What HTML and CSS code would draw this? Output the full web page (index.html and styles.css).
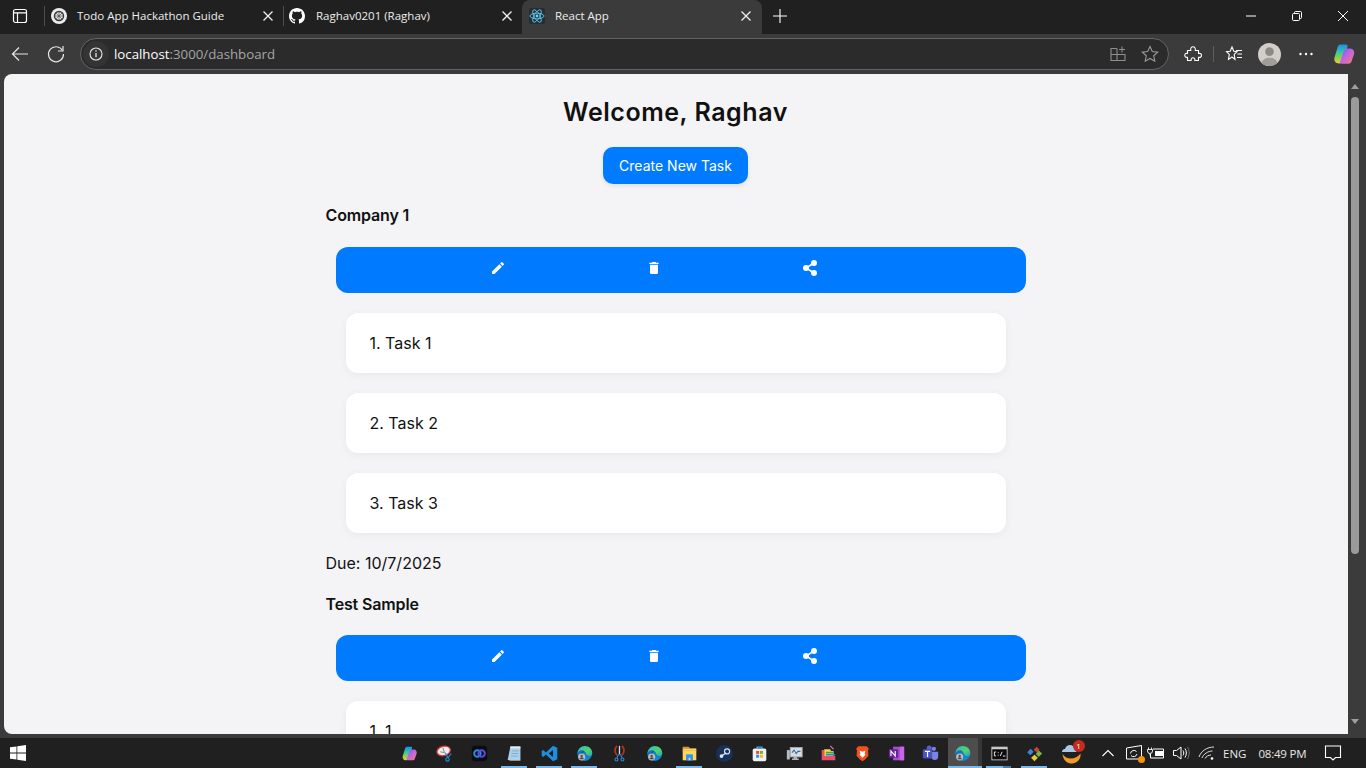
FILE: index.html
```html
<!DOCTYPE html>
<html lang="en">
<head>
<meta charset="utf-8">
<title>React App</title>
<link rel="stylesheet" href="styles.css">
</head>
<body>
<svg class="defs" width="0" height="0" aria-hidden="true">
  <defs>
    <linearGradient id="copl" x1="0" y1="0" x2="0" y2="1">
      <stop offset="0" stop-color="#1a8fe8"/><stop offset=".4" stop-color="#35c6a8"/><stop offset=".7" stop-color="#8ed04a"/><stop offset="1" stop-color="#f6c53a"/>
    </linearGradient>
    <linearGradient id="copr" x1="0" y1="0" x2="1" y2="1">
      <stop offset="0" stop-color="#6f5cf2"/><stop offset=".5" stop-color="#c765dc"/><stop offset="1" stop-color="#f77f6e"/>
    </linearGradient>
    <linearGradient id="edge" x1="0" y1="0" x2="1" y2="1">
      <stop offset="0" stop-color="#2cc0c0"/><stop offset=".6" stop-color="#52d26a"/><stop offset="1" stop-color="#1f9bd8"/>
    </linearGradient>
    <symbol id="i-edit" viewBox="0 0 24 24"><path d="M3 17.250V21h3.750L17.810 9.940l-3.750-3.750L3 17.250zM20.710 7.040a1 1 0 0 0 0-1.410l-2.340-2.340a1 1 0 0 0-1.410 0l-1.830 1.830 3.750 3.750 1.830-1.830z"/></symbol>
    <symbol id="i-del" viewBox="0 0 24 24"><path d="M6 19c0 1.100.9 2 2 2h8c1.100 0 2-.9 2-2V7H6v12zM19 4h-3.500l-1-1h-5l-1 1H5v2h14V4z"/></symbol>
    <symbol id="i-share" viewBox="0 0 16 16"><circle cx="12" cy="3" r="3"/><circle cx="4" cy="8" r="3"/><circle cx="12" cy="13" r="3"/><path d="M12 3L4 8l8 5" fill="none" stroke="#fff" stroke-width="1.500"/></symbol>
    <symbol id="i-x" viewBox="0 0 12 12"><path d="M1.500 1.500l9 9M10.500 1.500l-9 9" fill="none" stroke="currentColor" stroke-width="1.300"/></symbol>
    <symbol id="i-edge" viewBox="0 0 24 24">
      <path d="M2 13C2 6 7 1.500 12.500 1.500 18.500 1.500 23 6 23 11.500c0 3-2 4.500-4.500 4.500-2 0-4-1-4-2.500 0-3-3-5.500-6-5.500-3 0-5.500 2-6.500 5z" fill="url(#edge)"/>
      <path d="M2 13c0-3 2.500-5.500 6-5.500 2 0 3 .5 3.500 1.500-3 0-5 3-5 6.500 0 3 2 5.500 5 7C6 22 2 18 2 13z" fill="#1173c9"/>
      <path d="M14.500 13.500c0 1.500 1.500 2.500 3.500 2.500 2 0 4-.6 4.700-1.800C21 19.500 17 22.500 12.500 22.500c-3 0-6-3-6-6.500 0-3 2.500-6 5-6 1.500 0 3 2 3 3.500z" fill="#1485d6"/>
      <circle cx="8" cy="17" r="5" fill="#bdbdbd"/><circle cx="8" cy="15.500" r="1.700" fill="#4f4f4f"/><path d="M4.800 20c.5-1.900 1.800-2.700 3.200-2.700s2.700.8 3.200 2.700z" fill="#4f4f4f"/>
    </symbol>
    <symbol id="i-copilot" viewBox="0 0 24 24">
      <path d="M8.500 2.500h5.500c1.200 0 1.900.7 1.500 2L12 17c-.8 2.800-2.200 4.500-5 4.500-3.300 0-5.500-2.800-4.500-6l3-10c.5-2 1.400-3 3-3z" fill="url(#copl)"/>
      <path d="M15.500 6.500h2.500c3 0 5 2.800 4 5.800l-2.500 7.200c-.6 1.500-1.600 2.200-3.100 2.200H9.500c-1.200 0-1.800-.8-1.400-2l3.600-10.500c.6-1.600 2-2.700 3.800-2.700z" fill="url(#copr)"/>
    </symbol>
  </defs>
</svg>

<header class="tabstrip">
  <div class="sidebtn">
    <svg class="ico16" viewBox="0 0 16 16"><rect x="1.500" y="1.500" width="13" height="13" rx="2" fill="none" stroke="#fff" stroke-width="1.200"/><path d="M1.500 4.800h13M5.500 4.800v9.700" fill="none" stroke="#fff" stroke-width="1.200"/></svg>
  </div>
  <span class="tabsep"></span>
  <div class="tab tab-one">
    <svg class="favicon" viewBox="0 0 16 16"><circle cx="8" cy="8" r="8" fill="#ececec"/><circle cx="8" cy="8" r="4.500" fill="none" stroke="#333" stroke-width="1.400"/><path d="M8 3.500v9M3.500 8h9M5 5l6 6M11 5l-6 6" stroke="#555" stroke-width=".8"/></svg>
    <span class="tabtext">Todo App Hackathon Guide</span>
    <svg class="tabx"><use href="#i-x"/></svg>
  </div>
  <span class="tabsep"></span>
  <div class="tab tab-two">
    <svg class="favicon" viewBox="0 0 16 16"><path fill="#fff" d="M8 0C3.580 0 0 3.580 0 8c0 3.540 2.290 6.530 5.470 7.590.4.070.55-.17.55-.38 0-.19-.01-.82-.01-1.490-2.010.37-2.530-.49-2.690-.94-.09-.23-.48-.94-.82-1.130-.28-.15-.68-.52-.01-.53.630-.01 1.080.58 1.230.82.720 1.210 1.870.87 2.330.66.070-.52.280-.87.510-1.070-1.780-.2-3.640-.89-3.640-3.950 0-.87.310-1.590.820-2.150-.08-.2-.36-1.020.08-2.120 0 0 .67-.21 2.200.82.640-.18 1.320-.27 2-.27s1.360.09 2 .27c1.530-1.040 2.200-.82 2.200-.82.440 1.100.160 1.920.080 2.120.51.560.82 1.270.82 2.150 0 3.070-1.870 3.750-3.650 3.950.29.250.54.730.54 1.480 0 1.070-.01 1.930-.01 2.200 0 .21.150.46.550.38A8.010 8.010 0 0 0 16 8c0-4.420-3.580-8-8-8z"/></svg>
    <span class="tabtext">Raghav0201 (Raghav)</span>
    <svg class="tabx"><use href="#i-x"/></svg>
  </div>
  <div class="tab tab-active">
    <svg class="favicon" viewBox="0 0 16 16"><rect width="16" height="16" rx="2" fill="#282c34"/><g fill="none" stroke="#61dafb" stroke-width=".8"><ellipse cx="8" cy="8" rx="7" ry="2.800"/><ellipse cx="8" cy="8" rx="7" ry="2.800" transform="rotate(60 8 8)"/><ellipse cx="8" cy="8" rx="7" ry="2.800" transform="rotate(120 8 8)"/></g><circle cx="8" cy="8" r="1.400" fill="#61dafb"/></svg>
    <span class="tabtext">React App</span>
    <svg class="tabx"><use href="#i-x"/></svg>
  </div>
  <div class="newtab">
    <svg class="ico16" viewBox="0 0 16 16"><path d="M8 1v14M1 8h14" stroke="#fff" stroke-width="1.100"/></svg>
  </div>
  <div class="winctl">
    <div class="winbtn"><svg class="ico12" viewBox="0 0 12 12"><path d="M1 6h10" stroke="#fff" stroke-width="1"/></svg></div>
    <div class="winbtn"><svg class="ico12" viewBox="0 0 12 12"><rect x="1.500" y="3.500" width="7" height="7" rx="1" fill="none" stroke="#fff"/><path d="M3.500 3.500V2.500a1 1 0 0 1 1-1h5a1 1 0 0 1 1 1v5a1 1 0 0 1-1 1h-1" fill="none" stroke="#fff"/></svg></div>
    <div class="winbtn"><svg class="ico12" viewBox="0 0 12 12"><path d="M1 1l10 10M11 1L1 11" stroke="#fff" stroke-width="1"/></svg></div>
  </div>
</header>

<nav class="toolbar">
  <div class="navbtn"><svg class="ico20" viewBox="0 0 20 20"><path d="M18 10H2.500M9 3.500L2.500 10 9 16.500" fill="none" stroke="#e6e6e6" stroke-width="1.200"/></svg></div>
  <div class="navbtn"><svg class="ico20" viewBox="0 0 20 20"><path d="M16.500 6.500A7.500 7.500 0 1 0 17.500 10" fill="none" stroke="#e6e6e6" stroke-width="1.200"/><path d="M17 2v5h-5" fill="none" stroke="#e6e6e6" stroke-width="1.200"/></svg></div>
  <div class="address">
    <span class="siteinfo"><svg class="ico14" viewBox="0 0 14 14"><circle cx="7" cy="7" r="6" fill="none" stroke="#e6e6e6" stroke-width="1.100"/><path d="M7 6v4.200" stroke="#e6e6e6" stroke-width="1.300"/><circle cx="7" cy="4" r=".8" fill="#e6e6e6"/></svg></span>
    <span class="url"><span class="host">localhost</span><span class="path">:3000/dashboard</span></span>
    <span class="addr-icons">
      <svg class="ico18" viewBox="0 0 18 18"><path d="M8 3.500H2v12h14V9.500H2M8 3.500v12" fill="none" stroke="#8f8f8f" stroke-width="1.100"/><path d="M13 1.500v6M10 4.500h6" stroke="#8f8f8f" stroke-width="1.100"/></svg>
      <svg class="ico18" viewBox="0 0 18 18"><path d="M9 1.500l2.300 5 5.400.6-4 3.700 1.100 5.400L9 13.500l-4.800 2.700 1.100-5.400-4-3.700 5.400-.6z" fill="none" stroke="#9a9a9a" stroke-width="1.100"/></svg>
    </span>
  </div>
  <div class="tools">
    <svg class="ico18 t-ext" viewBox="0 0 18 18"><path d="M3.500 5.500H6.800C6.200 3 7.500 1.800 9 1.800S11.800 3 11.200 5.500H14.500V8.500C16.500 8 17.500 9 17.500 10.300S16.500 12.800 14.500 12.200V15.500H10.800C11.200 13.800 10.300 12.800 9 12.800S6.800 13.800 7.200 15.500H3.500V12.200C1.800 12.800 .8 11.800 .8 10.300S1.800 8 3.500 8.500Z" fill="none" stroke="#fff" stroke-width="1.100" stroke-linejoin="round"/></svg>
    <span class="toolsep"></span>
    <svg class="ico18 t-fav" viewBox="0 0 18 18"><path d="M7 2l1.800 4.200 3.200.4-2.800 2.800.8 5L7 12l-3.500 2.400.8-5L1.500 6.600l3.700-.4z" fill="none" stroke="#fff" stroke-width="1.100"/><path d="M11 5.500h6M12.500 9h4.500M12 12.500h5" stroke="#fff" stroke-width="1.100"/></svg>
    <svg class="avatar t-ava" viewBox="0 0 24 24"><circle cx="12" cy="12" r="12" fill="#d2cfca"/><circle cx="12" cy="9" r="4.500" fill="#8d8a86"/><path d="M3.500 20.500C5 17 8 15.500 12 15.500s7 1.500 8.500 5A12 12 0 0 1 3.500 20.500z" fill="#a19e99"/></svg>
    <svg class="ico18 t-more" viewBox="0 0 18 18"><circle cx="3.500" cy="9" r="1.200" fill="#fff"/><circle cx="9" cy="9" r="1.200" fill="#fff"/><circle cx="14.500" cy="9" r="1.200" fill="#fff"/></svg>
    <svg class="copilot t-cop"><use href="#i-copilot"/></svg>
  </div>
</nav>

<div class="viewport">
  <main class="page">
    <h1 class="welcome">Welcome, Raghav</h1>
    <button class="create">Create New Task</button>
    <div class="list">
      <section class="company">
        <h2 class="cname">Company 1</h2>
        <div class="actions">
          <span class="act"><svg class="acticon"><use href="#i-edit"/></svg></span>
          <span class="act"><svg class="acticon"><use href="#i-del"/></svg></span>
          <span class="act"><svg class="acticon"><use href="#i-share"/></svg></span>
        </div>
        <div class="task">1. Task 1</div>
        <div class="task">2. Task 2</div>
        <div class="task">3. Task 3</div>
        <p class="due">Due: 10/7/2025</p>
      </section>
      <section class="company">
        <h2 class="cname">Test Sample</h2>
        <div class="actions">
          <span class="act"><svg class="acticon"><use href="#i-edit"/></svg></span>
          <span class="act"><svg class="acticon"><use href="#i-del"/></svg></span>
          <span class="act"><svg class="acticon"><use href="#i-share"/></svg></span>
        </div>
        <div class="task">1. 1</div>
      </section>
    </div>
  </main>
  <aside class="scrollbar">
    <span class="arrow-up"></span>
    <span class="thumb"></span>
    <span class="arrow-down"></span>
  </aside>
</div>

<footer class="taskbar">
  <svg class="winlogo" viewBox="0 0 16 16"><path fill="#fff" d="M0 2.300l6.500-.9v6.200H0zM7.300 1.300L16 0v7.600H7.300zM0 8.400h6.500v6.200L0 13.700zM7.300 8.400H16V16l-8.700-1.200z"/></svg>
  <div class="apps">
    <span class="app"><svg class="appicon"><use href="#i-copilot"/></svg></span>
    <span class="app"><svg class="appicon" viewBox="0 0 20 20"><ellipse cx="9" cy="7" rx="8" ry="5.500" transform="rotate(-15 9 7)" fill="#eee" stroke="#d23c3c" stroke-width="1.500"/><path d="M8 3l2 6M10 9l-5-1" stroke="#777"/><path d="M11 9l3 6M18 10l-4 5" stroke="#1f8fdc" stroke-width="1.300"/><circle cx="13.500" cy="17" r="2" fill="none" stroke="#1f8fdc" stroke-width="1.300"/></svg></span>
    <span class="app"><svg class="appicon" viewBox="0 0 20 20"><rect x="1" y="1" width="18" height="18" rx="4" fill="#0c0c10"/><circle cx="7.500" cy="10" r="3.800" fill="none" stroke="#1f8fe8" stroke-width="2.300"/><circle cx="12.500" cy="10" r="3.800" fill="none" stroke="#5a4fe0" stroke-width="2.300"/></svg></span>
    <span class="app run"><svg class="appicon" viewBox="0 0 20 20"><path d="M5 2.500h12v15H2z" fill="#a9d2ea"/><path d="M5 17.500h12v1H3z" fill="#cbb98f"/><path d="M5 1.500h12v2.500H5z" fill="#e6eef3"/><path d="M7 7h8M6.500 10h8M6 13h8" stroke="#7fa7c2"/></svg></span>
    <span class="app run"><svg class="appicon" viewBox="0 0 24 24"><path d="M17 1l6 3v16l-6 3-10-9.500L3 17l-2-1.500V8.500L3 7l4 3.500zM17 7l-6 5 6 5z" fill="#1c8fe0" fill-rule="evenodd"/></svg></span>
    <span class="app run"><svg class="appicon"><use href="#i-edge"/></svg></span>
    <span class="app"><svg class="appicon" viewBox="0 0 20 20"><path d="M7 1c-3 3-3 8 0 11M13 1c3 3 3 8 0 11" fill="none" stroke="#b8341f" stroke-width="2"/><path d="M10 1v10" stroke="#ddd" stroke-width="1.500"/><path d="M9 11l-2 4M11 11l2 4" stroke="#2a8fe0" stroke-width="1.300"/><circle cx="6.500" cy="17" r="1.800" fill="none" stroke="#2a8fe0" stroke-width="1.200"/><circle cx="13.500" cy="17" r="1.800" fill="none" stroke="#2a8fe0" stroke-width="1.200"/></svg></span>
    <span class="app"><svg class="appicon"><use href="#i-edge"/></svg></span>
    <span class="app run"><svg class="appicon" viewBox="0 0 20 20"><path d="M2 2h7l2 2H2z" fill="#d99a1c"/><path d="M2 4h16v14H2z" fill="#fbd56a"/><path d="M2 6h16v1H2z" fill="#f3bf3f"/><path d="M6 18v-7h8v7z" fill="#2f95e4"/><path d="M9 18v-3h2v3z" fill="#bfe0f7"/></svg></span>
    <span class="app"><svg class="appicon" viewBox="0 0 20 20"><circle cx="10" cy="10" r="9.800" fill="#16325a"/><circle cx="13" cy="7.500" r="3" fill="none" stroke="#dfe6ee" stroke-width="1.300"/><circle cx="6.500" cy="13" r="2.200" fill="#dfe6ee"/><path d="M6.500 13L12 9" stroke="#dfe6ee" stroke-width="1.500"/></svg></span>
    <span class="app"><svg class="appicon" viewBox="0 0 20 20"><path d="M7 4V2.500h6V4" fill="none" stroke="#3fb0e8" stroke-width="1.300"/><rect x="2" y="4" width="16" height="15" rx="2" fill="#eef0f2"/><rect x="6" y="7" width="3.500" height="3.500" fill="#e8532d"/><rect x="10.500" y="7" width="3.500" height="3.500" fill="#6fb52c"/><rect x="6" y="11.500" width="3.500" height="3.500" fill="#1c9bea"/><rect x="10.500" y="11.500" width="3.500" height="3.500" fill="#fbb81c"/></svg></span>
    <span class="app"><svg class="appicon" viewBox="0 0 20 20"><rect x="5" y="3" width="14" height="11" fill="#d8dcdf" stroke="#aab0b4"/><path d="M7 9l2.500-3 2.500 4 2-2.500h3" fill="none" stroke="#2a6db0" stroke-width="1.200"/><rect x="1" y="6" width="3.500" height="11" fill="#b9bdc0"/><path d="M9 14h4v2h2v1.500H7V16h2z" fill="#b0b4b7"/></svg></span>
    <span class="app tight"><svg class="appicon" viewBox="0 0 20 20"><path d="M2 6v12h16v-5H5V6z" fill="#e5506a"/><path d="M5 5h7l1 2h3v6H5z" fill="#f5d34a"/><path d="M7 8h9v1.800H7z" fill="#2fa84f"/><path d="M7 10.500h11v1.800H7z" fill="#2f7fe0"/><path d="M12 1l4 4" stroke="#c66ae0" stroke-width="1.500"/></svg></span>
    <span class="app tight"><svg class="appicon" viewBox="0 0 20 20"><path d="M5 1.500h10l2.500 3-1 2 .5 6-4 4.500L10 19l-3-2-4-4.500.5-6-1-2z" fill="#f4501e"/><path d="M6.500 6.500L10 8l3.500-1.500-1 3.500 1 1.500L10 15l-3.500-3.500 1-1.500z" fill="#fff"/></svg></span>
    <span class="app tight"><svg class="appicon" viewBox="0 0 20 20"><rect x="6" y="2" width="13" height="16" fill="#a651c9"/><rect x="14" y="2" width="5" height="16" fill="#ca64ea"/><rect x="1" y="5" width="11" height="10" rx="1" fill="#6b1f9e"/><path d="M3.500 13V7l5 6V7" fill="none" stroke="#fff" stroke-width="1.300"/></svg></span>
    <span class="app tight"><svg class="appicon" viewBox="0 0 20 20"><circle cx="14" cy="4.500" r="2.500" fill="#7b83eb"/><path d="M11 8h8v6c0 2-2 3.500-4 3.500S11 16 11 14z" fill="#7b83eb"/><circle cx="8.500" cy="3.500" r="3" fill="#5b5fc7"/><rect x="1" y="5" width="11" height="11" rx="1.500" fill="#4b53bc"/><path d="M3.500 7.500h6M6.500 7.500v6.500" stroke="#fff" stroke-width="1.400"/></svg></span>
    <span class="app tight active"><svg class="appicon"><use href="#i-edge"/></svg></span>
    <span class="app run dbl"><svg class="appicon" viewBox="0 0 20 20"><rect x="1" y="2.500" width="18" height="15" fill="#0c0c0c" stroke="#cfcfcf"/><rect x="1" y="2.500" width="18" height="2.500" fill="#cfcfcf"/><path d="M6 8.200H4v4.600h2M8 9h1M8 12h1M13 8l-2 5M14 13h3" fill="none" stroke="#fff" stroke-width="1"/></svg></span>
    <span class="app run"><svg class="appicon" viewBox="0 0 20 20"><path d="M5.500 4.500L9 8l-4 4-3.500-3.500z" fill="#3d86d8"/><path d="M12.500 2L16 5.500 13 9 9 5.500z" fill="#c9432f"/><path d="M15 6.500l4 3.500-4 4-3.500-3.500z" fill="#72b84a"/><path d="M10 11.500L14 15l-4 4-4-4z" fill="#e9c83d"/></svg></span>
    <span class="app wide"><span class="weather"><svg class="sunicon" viewBox="0 0 22 21"><path d="M1.500 11c2 3 5 4.500 8.500 4.500 3.500 0 7-1.500 9.500-5 .8 6-4 10-9 10-5 0-8.500-4-9-9.500z" fill="#f29a26"/><path d="M1 9c0-1.800 1.200-3 3-3C4.800 3.500 6.800 2 9 2c2.500 0 4.500 2 4.500 4.500 1.300 0 2 1 2 2.500z" fill="#a9c7e8"/></svg><span class="badge">1</span></span></span>
  </div>
  <div class="tray">
    <svg class="ico14 tr-chev" viewBox="0 0 14 14"><path d="M1.500 10L7 4.500 12.500 10" fill="none" stroke="#fff" stroke-width="1.100"/></svg>
    <span class="tr-sync"><svg class="ico18" viewBox="0 0 18 18"><path d="M1.500 4l15-2.500V15h-15z" fill="none" stroke="#fff" stroke-width="1"/><path d="M5.500 9.500a3.500 3.500 0 0 1 6-2M12 10a3.500 3.500 0 0 1-6 1.500" fill="none" stroke="#fff" stroke-width="1"/></svg><i class="dot"></i></span>
    <svg class="ico18 tr-bat" viewBox="0 0 18 18"><path d="M6 5H16.500V14H3.500V10" fill="none" stroke="#fff" stroke-width="1"/><path d="M8 7h8v5H8z" fill="#fff"/><path d="M1.500 3.500v2M4.500 3.500v2M.5 5.500h5v1.500a2.500 2.500 0 0 1-5 0zM3 9.500v2" fill="none" stroke="#fff" stroke-width=".9"/></svg>
    <svg class="ico18 tr-vol" viewBox="0 0 18 18"><path d="M1.500 6.500h3L9 3v12l-4.500-3.500h-3z" fill="none" stroke="#fff" stroke-width="1"/><path d="M11 6.500c1 1.500 1 3.500 0 5M13 4.500c1.800 2.500 1.800 6.500 0 9" fill="none" stroke="#fff" stroke-width="1"/><path d="M15.500 3c2.200 3.500 2.200 8.500 0 12" fill="none" stroke="#777" stroke-width="1"/></svg>
    <svg class="ico18 tr-wifi" viewBox="0 0 18 18"><path d="M1 13C3 7 9 3 16 3M4 14c1.500-4 6-7 10.500-7M7 14.500c1-2 3.500-3.500 6-3.500" fill="none" stroke="#dcdcdc" stroke-width="1"/><circle cx="14" cy="14.500" r="1.300" fill="#fff"/></svg>
    <span class="lang">ENG</span>
    <span class="clock">08:49 PM</span>
    <svg class="ico18 tr-note" viewBox="0 0 18 18"><path d="M1.500 2h15v11.500h-5L9 16l-2.500-2.500h-5z" fill="none" stroke="#fff" stroke-width="1.100"/></svg>
  </div>
</footer>
</body>
</html>
```

FILE: styles.css
```css
* { box-sizing: border-box; }
html, body { margin: 0; padding: 0; height: 100%; overflow: hidden; }
body {
  width: 1366px;
  height: 768px;
  display: flex;
  flex-direction: column;
  background: #3b3b3b;
  font-family: "Open Sans", "Noto Sans", sans-serif;
}
svg { display: block; flex: none; }
.defs { position: absolute; }
.ico12 { width: 12px; height: 12px; }
.ico14 { width: 14px; height: 14px; }
.ico16 { width: 16px; height: 16px; }
.ico18 { width: 18px; height: 18px; }
.ico20 { width: 20px; height: 20px; }

/* tab strip */
.tabstrip {
  height: 34px;
  flex: none;
  display: flex;
  align-items: center;
  background: #202020;
  color: #fff;
}
.sidebtn { width: 44px; height: 34px; display: flex; align-items: center; justify-content: center; }
.sidebtn .ico16 { margin-top: -2px; margin-left: -4px; }
.tabsep { width: 1px; height: 20px; background: #4d4d4d; flex: none; margin-top: -2px; }
.tab {
  height: 34px;
  display: flex;
  align-items: center;
  flex: none;
  font-size: 11.500px;
  color: #eee;
  padding-bottom: 3px;
}
.tab-one { width: 238px; padding-left: 6px; padding-right: 9px; }
.tab-two { width: 238px; padding-left: 5px; padding-right: 9px; }
.tab-active {
  width: 240px;
  padding-left: 7px;
  padding-right: 10px;
  background: #3b3b3b;
  border-radius: 8px 8px 0 0;
}
.favicon { width: 16px; height: 16px; }
.tabtext { flex: 1; margin-left: 10px; white-space: nowrap; }
.tab-two .tabtext { margin-left: 11px; }
.tabx { width: 12px; height: 12px; color: #f0f0f0; }
.newtab { width: 36px; height: 34px; display: flex; align-items: center; justify-content: center; padding-bottom: 3px; }
.winctl { margin-left: auto; display: flex; height: 34px; }
.winbtn { width: 46px; height: 34px; display: flex; align-items: center; justify-content: center; padding-bottom: 3px; }

/* toolbar */
.toolbar {
  height: 40px;
  flex: none;
  display: flex;
  align-items: center;
  background: #3b3b3b;
  padding-left: 2px;
}
.navbtn { width: 36px; height: 32px; display: flex; align-items: center; justify-content: center; }
.address {
  width: 1089px;
  height: 32px;
  margin-left: 6px;
  display: flex;
  align-items: center;
  background: #2b2b2b;
  border: 1px solid #646464;
  border-radius: 16px;
}
.siteinfo {
  width: 26px;
  height: 26px;
  margin-left: 2px;
  border-radius: 13px;
  background: #343434;
  display: flex;
  align-items: center;
  justify-content: center;
}
.url { margin-left: 5px; font-size: 13.250px; }
.host { color: #fff; }
.path { color: #a6a6a6; }
.addr-icons { margin-left: auto; display: flex; gap: 14px; padding-right: 9px; }
.tools { flex: 1; display: flex; align-items: center; padding-left: 15px; }
.toolsep { width: 1px; height: 16px; background: #5e5e5e; margin-left: 11px; }
.t-fav { margin-left: 11px; }
.avatar { width: 23px; height: 23px; }
.t-ava { margin-left: 15px; }
.t-more { margin-left: 16px; }
.copilot { width: 24px; height: 24px; }
.t-cop { margin-left: 17px; }

/* viewport */
.viewport {
  height: 660px;
  flex: none;
  margin: 0 4px;
  display: flex;
}
.page {
  width: 1344px;
  height: 660px;
  padding-right: 1px;
  overflow: hidden;
  background: #f4f4f6;
  border-radius: 8px 0 0 8px;
  display: flex;
  flex-direction: column;
  align-items: center;
  color: #111;
  font-family: Inter, sans-serif;
}
.welcome {
  margin: 23px 0 0;
  height: 30px;
  font-family: Inter, sans-serif;
  font-size: 25px;
  line-height: 30px;
  font-weight: 600;
  letter-spacing: .55px;
}
.create {
  margin-top: 20px;
  width: 145px;
  height: 37px;
  padding: 0;
  border: 0;
  border-radius: 10px;
  background: #007bff;
  color: #fff;
  font: 400 14px/37px Inter, sans-serif;
  box-shadow: 0 2px 5px rgba(0, 0, 0, .08);
}
.list { width: 700px; margin-top: 21px; flex: none; }
.company { display: flex; flex-direction: column; }
.cname { margin: 0; height: 20px; font-size: 16px; line-height: 20px; font-weight: 600; letter-spacing: -.15px; }
.actions {
  width: 690px;
  height: 46px;
  margin: 22px 0 0 10px;
  padding-left: 84px;
  display: flex;
  background: #007bff;
  border-radius: 12px;
}
.company + .company { margin-top: 21px; }
.company + .company .actions { margin-top: 21px; }
.act { width: 156px; height: 42px; display: flex; align-items: center; justify-content: center; }
.acticon { width: 16px; height: 16px; fill: #fff; }
.task {
  width: 660px;
  height: 60px;
  margin: 20px 0 0 20px;
  padding-left: 24px;
  flex: none;
  background: #fff;
  border-radius: 12px;
  font-size: 16px;
  line-height: 60px;
  box-shadow: 0 2px 10px rgba(0, 0, 0, .05);
}
.due { margin: 20px 0 0; height: 20px; font-size: 16px; line-height: 20px; }

/* scrollbar */
.scrollbar {
  width: 14px;
  height: 660px;
  display: flex;
  flex-direction: column;
  align-items: center;
  background: #3b3b3b;
}
.arrow-up { margin-top: 10px; width: 0; height: 0; border: 4px solid transparent; border-top: 0; border-bottom: 5px solid #9e9e9e; }
.thumb { margin-top: 8px; width: 8px; height: 457px; border-radius: 4px; background: #9b9b9b; }
.arrow-down { margin-top: auto; margin-bottom: 10px; width: 0; height: 0; border: 4px solid transparent; border-bottom: 0; border-top: 5px solid #9e9e9e; }

/* taskbar */
.taskbar {
  margin-top: 4px;
  height: 30px;
  flex: none;
  display: flex;
  align-items: center;
  background: #202020;
}
.winlogo { width: 16px; height: 16px; margin-left: 10px; }
.apps { display: flex; margin-left: 365.500px; height: 30px; }
.app {
  width: 35px;
  height: 30px;
  flex: none;
  display: flex;
  align-items: center;
  justify-content: center;
  position: relative;
}
.app.tight { width: 34px; }
.app.wide { width: 40px; }
.appicon { width: 17px; height: 17px; }
.sunicon { width: 22px; height: 21px; }
.run::after {
  content: "";
  position: absolute;
  left: 4.500px;
  right: 4.500px;
  bottom: 0;
  height: 2px;
  background: #76b9ed;
}
.dbl::after { right: 13.500px; }
.dbl::before {
  content: "";
  position: absolute;
  left: 21.500px;
  right: 5.500px;
  bottom: 0;
  height: 2px;
  background: #4d7fa6;
}
.active { background: #4d4d4d; border-right: 4px solid #363636; }
.active::after {
  content: "";
  position: absolute;
  left: 0;
  right: -4px;
  bottom: 0;
  height: 2px;
  background: #76b9ed;
}
.weather { position: relative; display: block; }
.badge {
  position: absolute;
  top: -3px;
  right: -2px;
  width: 12px;
  height: 12px;
  border-radius: 6px;
  background: #c42b1c;
  color: #fff;
  font: 8px/12px "Open Sans", sans-serif;
  text-align: center;
}
.tray { display: flex; align-items: center; margin-left: 9.500px; color: #e8e8e8; font-size: 11.500px; }
.tr-sync { position: relative; margin-left: 10px; display: block; }
.dot { position: absolute; right: -2px; bottom: -1px; width: 7px; height: 7px; border-radius: 4px; background: #f7930e; }
.tr-bat { margin-left: 4px; }
.tr-vol { margin-left: 7px; }
.tr-wifi { margin-left: 8px; }
.lang { margin-left: 7px; }
.clock { margin-left: 12px; letter-spacing: -.2px; }
.tr-note { margin-left: 18px; }
```
